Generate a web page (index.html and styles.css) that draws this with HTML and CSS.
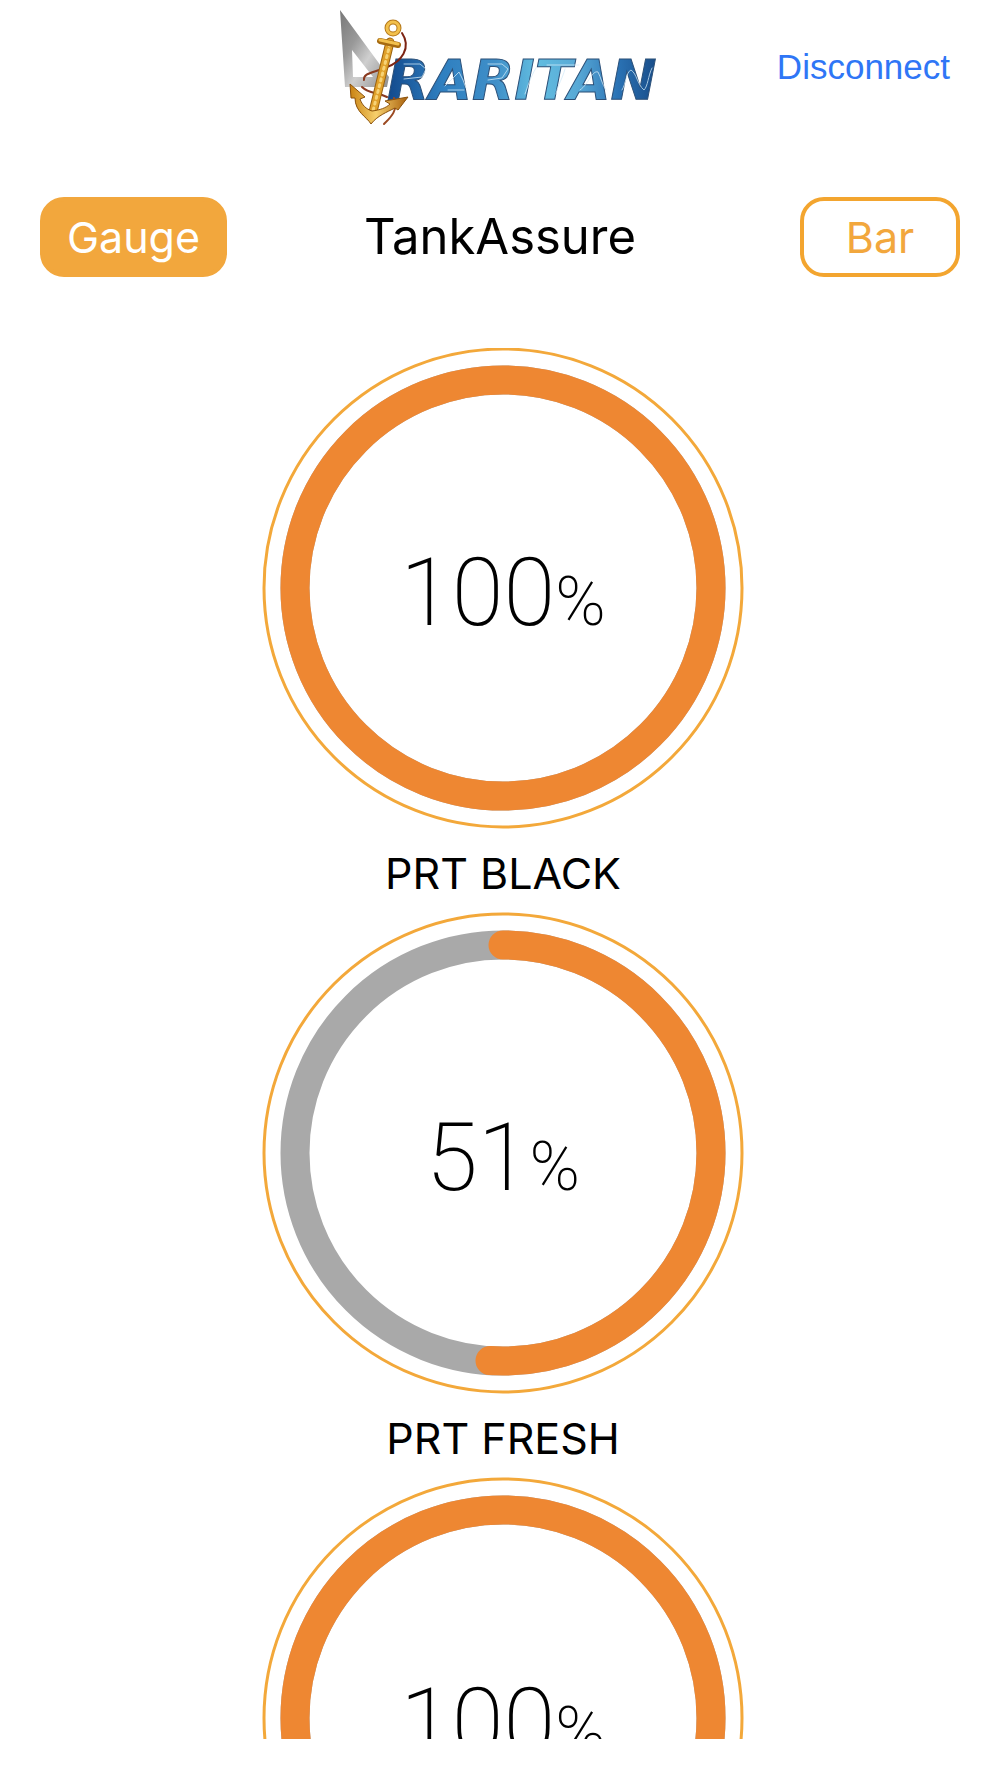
FILE: index.html
```html
<!DOCTYPE html>
<html lang="en">
<head>
<meta charset="utf-8">
<meta name="viewport" content="width=device-width, initial-scale=1">
<title>TankAssure</title>
<link rel="stylesheet" href="styles.css">
</head>
<body>
<div class="app">
  <header class="header">
    <svg class="logo" viewBox="340 8 322 120" role="img" aria-label="Raritan">
      <defs>
        <linearGradient id="steel" x1="0" y1="0" x2="1" y2="1">
          <stop offset="0" stop-color="#777"/>
          <stop offset=".35" stop-color="#999"/>
          <stop offset=".6" stop-color="#cfcfcf"/>
          <stop offset="1" stop-color="#8d8d8d"/>
        </linearGradient>
        <linearGradient id="gold" x1="0" y1="0" x2="1" y2="0">
          <stop offset="0" stop-color="#c98212"/>
          <stop offset=".45" stop-color="#f6cf6c"/>
          <stop offset="1" stop-color="#a8600c"/>
        </linearGradient>
        <linearGradient id="water" gradientUnits="userSpaceOnUse" x1="388" y1="0" x2="660" y2="0">
          <stop offset="0" stop-color="#12498c"/>
          <stop offset=".2" stop-color="#2f7fc0"/>
          <stop offset=".4" stop-color="#3f8fc8"/>
          <stop offset=".55" stop-color="#62bde0"/>
          <stop offset=".7" stop-color="#58a9d6"/>
          <stop offset=".85" stop-color="#2a72b4"/>
          <stop offset="1" stop-color="#174a86"/>
        </linearGradient>
      </defs>
      <path fill="url(#steel)" fill-rule="evenodd" d="M341 10L390 77L388 87L346 87Z M353 50L354 77L374 77Z"/>
      <text class="logo-text" x="388" y="99">RARITAN</text>
      <g fill="none" stroke="#d4ecfa" stroke-width="1" stroke-linecap="round" opacity=".75">
        <path d="M405 64h16l6 5-4 8-18 2"/>
        <path d="M446 86l14-14 4 8 3 8M449 90h16"/>
        <path d="M489 64h14l6 5-6 9-14 2"/>
        <path d="M526 94c3-8 5-16 11-26"/>
        <path d="M548 65h32M557 94c2-10 6-14 9-25"/>
        <path d="M581 90c9-6 12-20 18-18 3 6 4 12 8 18"/>
        <path d="M623 90c4-6 4-18 9-20 6 4 6 14 13 20 4-4 4-14 8-22"/>
      </g>
      <g fill="none" stroke-linecap="round">
        <path stroke="#7c2413" stroke-width="2" d="M403 33C413 48 402 62 388 67"/>
        <path stroke="#8a3a20" stroke-width="2" d="M388 67C374 73 364 73 365 80M363 87C370 94 378 92 388 97"/>
        <path stroke="#9c4a22" stroke-width="2" d="M395 98C400 110 391 118 385 124"/>
        <path stroke="#9a620f" stroke-width="9" d="M391 42L374 112"/>
        <path stroke="#e0a02a" stroke-width="7" d="M391 42L374 112"/>
        <path stroke="#f7d376" stroke-width="3" stroke-dasharray="2 4" d="M391 44L374 111"/>
        <circle cx="394" cy="28" r="6" stroke="#b5781a" stroke-width="5"/>
        <circle cx="394" cy="28" r="6" stroke="#f2c04c" stroke-width="3"/>
        <path stroke="#a66a10" stroke-width="6" d="M381 41L399 45"/>
        <path stroke="#f2c04c" stroke-width="3" d="M381 40L399 44"/>
      </g>
      <path fill="url(#gold)" stroke="#8a500a" stroke-width="1" stroke-linejoin="round" d="M351 84L366 97L361 99C363 105 367 109 373 111C381 110 387 108 391 104L386 101L409 97L399 110L396 108C388 112 378 116 372 124C368 117 356 112 356 98L352 98Z"/>
    </svg>
    <button class="disconnect" type="button">Disconnect</button>
  </header>

  <nav class="modes">
    <button class="mode mode-active" type="button" aria-pressed="true">Gauge</button>
    <h1 class="title">TankAssure</h1>
    <button class="mode mode-bar" type="button" aria-pressed="false">Bar</button>
  </nav>

  <main class="tanks">
    <section class="tank">
      <div class="gauge">
        <svg class="dial" viewBox="0 0 480 480" aria-hidden="true">
          <circle class="rim" cx="240" cy="240" r="239"/>
          <circle class="track" cx="240" cy="240" r="208"/>
          <circle class="level" cx="240" cy="240" r="208" pathLength="100" stroke-dasharray="100 100"/>
        </svg>
        <p class="value">100<span class="unit">%</span></p>
      </div>
      <h2 class="name">PRT BLACK</h2>
    </section>
    <section class="tank">
      <div class="gauge">
        <svg class="dial" viewBox="0 0 480 480" aria-hidden="true">
          <circle class="rim" cx="240" cy="240" r="239"/>
          <circle class="track" cx="240" cy="240" r="208"/>
          <circle class="level" cx="240" cy="240" r="208" pathLength="100" stroke-dasharray="51 100"/>
        </svg>
        <p class="value">51<span class="unit">%</span></p>
      </div>
      <h2 class="name">PRT FRESH</h2>
    </section>
    <section class="tank">
      <div class="gauge">
        <svg class="dial" viewBox="0 0 480 480" aria-hidden="true">
          <circle class="rim" cx="240" cy="240" r="239"/>
          <circle class="track" cx="240" cy="240" r="208"/>
          <circle class="level" cx="240" cy="240" r="208" pathLength="100" stroke-dasharray="100 100"/>
        </svg>
        <p class="value">100<span class="unit">%</span></p>
      </div>
    </section>
  </main>
</div>
</body>
</html>
```
FILE: styles.css
```css
* {
  box-sizing: border-box;
}

body {
  margin: 0;
  background: #fff;
  color: #000;
  font-family: Inter, "Liberation Sans", sans-serif;
}

.app {
  display: flex;
  flex-direction: column;
  height: 100vh;
  padding-bottom: 39px;
}

.header {
  display: grid;
  grid-template-columns: 1fr 322px 1fr;
  align-items: center;
  padding: 8px 40px 0;
}

.logo {
  grid-column: 2;
  display: block;
  width: 100%;
}

.logo-text {
  font: italic bold 55px "DejaVu Sans", sans-serif;
  fill: url(#water);
  stroke: #2c5078;
  stroke-width: 1px;
}

.disconnect {
  justify-self: end;
  padding: 0 10px 2px;
  border: 0;
  background: none;
  color: #2f76f6;
  font: 35px/40px "Liberation Sans", sans-serif;
}

.modes {
  display: grid;
  grid-template-columns: 1fr auto 1fr;
  align-items: center;
  padding: 69px 40px 0;
}

.mode {
  height: 80px;
  border: 4px solid #f3a52f;
  border-radius: 24px;
  background: #fff;
  color: #f2a73d;
  font: 43px/52px Inter, sans-serif;
}

.mode-active {
  justify-self: start;
  width: 187px;
  border-color: #f2a73d;
  background: #f2a73d;
  color: #fff;
}

.mode-bar {
  justify-self: end;
  width: 160px;
}

.title {
  margin: 0;
  font-size: 49px;
  font-weight: 400;
  line-height: 64px;
}

.tanks {
  flex: 1;
  min-height: 0;
  overflow: hidden;
  display: flex;
  flex-direction: column;
  align-items: center;
  margin-top: 71px;
  padding-left: 6px;
}

.tank {
  flex: none;
  width: 480px;
}

.gauge {
  display: grid;
  place-items: center;
}

.dial,
.value {
  grid-area: 1 / 1;
}

.dial {
  display: block;
  width: 100%;
  overflow: visible;
}

.dial circle {
  fill: none;
}

.rim {
  stroke: #f3a83a;
  stroke-width: 3px;
}

.track {
  stroke: #a9a9a9;
  stroke-width: 29px;
}

.level {
  stroke: #ee8732;
  stroke-width: 29px;
  stroke-linecap: round;
  transform: rotate(-90deg);
  transform-origin: center;
}

.value {
  margin: 0;
  padding-top: 18px;
  font: 200 94px/108px Roboto, sans-serif;
}

.unit {
  font-size: 68px;
}

.name {
  margin: 0;
  padding: 20px 0 15px;
  font-size: 43px;
  font-weight: 400;
  line-height: 50px;
  text-align: center;
}
```
